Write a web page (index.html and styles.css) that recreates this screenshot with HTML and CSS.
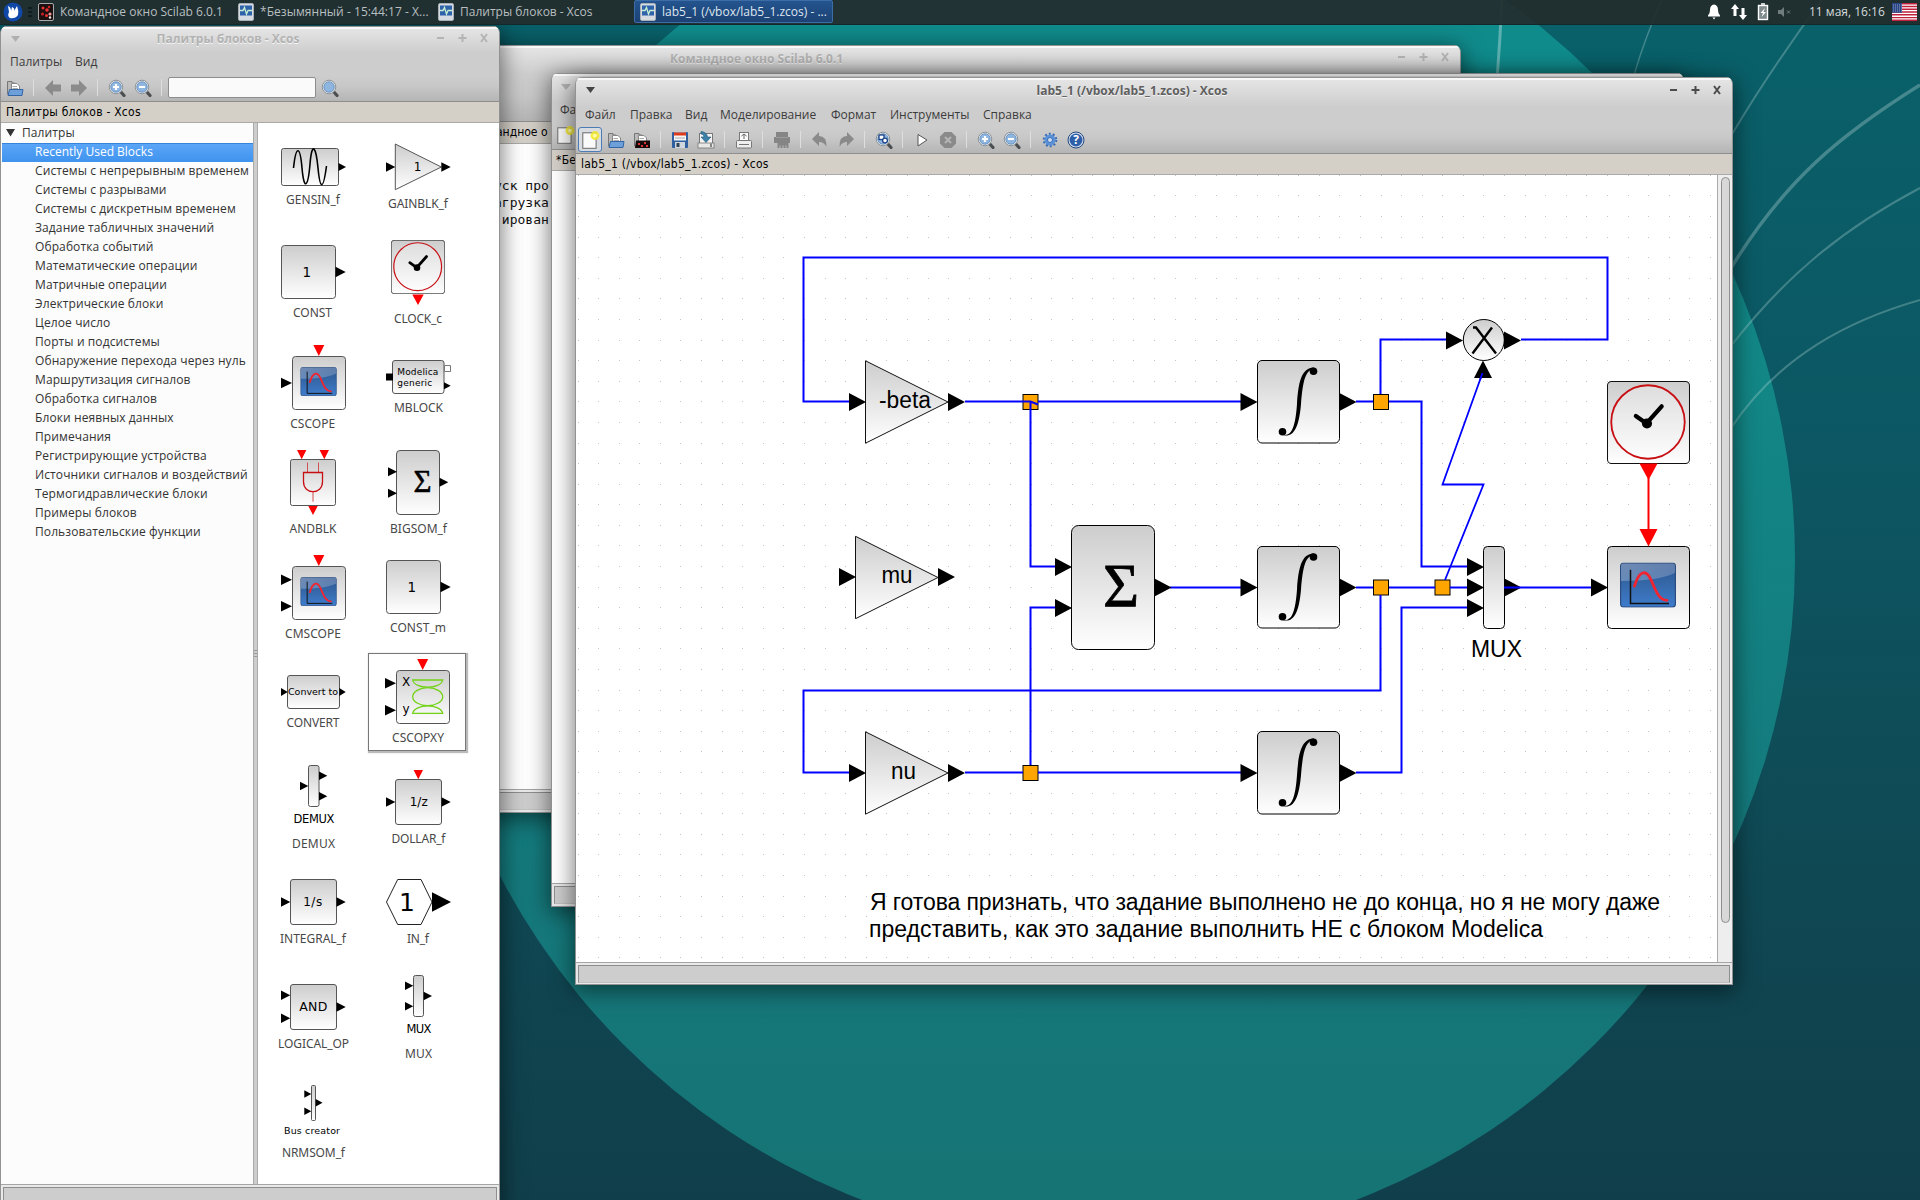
FILE: index.html
```html
<!DOCTYPE html>
<html lang="ru">
<head>
<meta charset="utf-8">
<title>Xcos</title>
<link rel="stylesheet" href="styles.css">
</head>
<body>
<svg class="defs" width="0" height="0" aria-hidden="true">
  <defs>
    <linearGradient id="blk" x1="0" y1="0" x2="0" y2="1"><stop offset="0" stop-color="#cdcdcd"/><stop offset="1" stop-color="#fff"/></linearGradient>
    <linearGradient id="scr" x1="0" y1="0" x2="0" y2="1"><stop offset="0" stop-color="#2c5390"/><stop offset=".4" stop-color="#3465a4"/><stop offset="1" stop-color="#3f7ccc"/></linearGradient>
    <linearGradient id="gloss" x1="0" y1="0" x2="1" y2="1"><stop offset="0" stop-color="#fff" stop-opacity=".32"/><stop offset="1" stop-color="#fff" stop-opacity=".18"/></linearGradient>
    <symbol id="screen" viewBox="0 0 56 44" preserveAspectRatio="none">
      <rect x=".6" y=".6" width="54.8" height="43" rx="3" fill="url(#scr)" stroke="#2a4c80" stroke-width="1.2"/>
      <path d="M1 3Q1 1 3 1H53Q55 1 55 3V10Q40 18 1 18z" fill="url(#gloss)"/>
      <path d="M10.5 7V40H49" fill="none" stroke="#111" stroke-width="1.5"/>
      <path d="M14.500 23C19 8 26 6 31 17C36 28 39 37 47 37" fill="none" stroke="#f22430" stroke-width="2.800" stroke-linecap="round"/>
    </symbol>
    <symbol id="clock" viewBox="0 0 82 82">
      <rect x=".5" y=".5" width="81" height="81" rx="4" fill="url(#blk)" stroke="#111"/>
      <circle cx="40.500" cy="40.500" r="36.300" fill="#fff" fill-opacity=".3" stroke="#c80f14" stroke-width="1.800"/>
      <path d="M28.500 34.500L39 42L54 25" fill="none" stroke="#000" stroke-width="4.200" stroke-linecap="round"/><circle cx="39.500" cy="42" r="5"/>
    </symbol>
    <symbol id="mag" viewBox="0 0 18 18"><path d="M12 12L16 16.500" stroke="#4b4f51" stroke-width="3.200" stroke-linecap="round"/><circle cx="8" cy="8" r="6.800" fill="#dfe3e6" stroke="#8d9396" stroke-width="1"/><circle cx="8" cy="8" r="5.200" fill="#8fb6df" stroke="#5f8cc0" stroke-width=".8"/></symbol>
    <symbol id="plus" viewBox="0 0 18 18"><use href="#mag" width="18" height="18"/><path d="M8 5V11M5 8H11" stroke="#fff" stroke-width="2.200"/></symbol>
    <symbol id="minus" viewBox="0 0 18 18"><use href="#mag" width="18" height="18"/><path d="M5 8H11" stroke="#fff" stroke-width="2.200"/></symbol>
    <symbol id="new" viewBox="0 0 18 18"><rect x="2.500" y="2.500" width="12" height="14" fill="#fafafa" stroke="#777"/><circle cx="13.500" cy="5" r="4" fill="#f5e928" opacity=".85"/><circle cx="13.500" cy="5" r="1.700" fill="#ffffb0"/></symbol>
    <symbol id="open" viewBox="0 0 18 18"><path d="M1.500 15V2.500H6V4H9V15z" fill="#b9bab8" stroke="#777"/><path d="M5.500 12V4.500H11L13.500 7V12z" fill="#fff" stroke="#888"/><path d="M6.500 7.500H11M6.500 9.500H12" stroke="#aaa"/><path d="M3.500 10.500H17L16 16.500H2z" fill="#6da0db" stroke="#3465a4"/></symbol>
    <symbol id="openk" viewBox="0 0 18 18"><path d="M1.500 15V2.500H6V4H9V15z" fill="#b9bab8" stroke="#777"/><path d="M5.500 12V4.500H11L13.500 7V12z" fill="#fff" stroke="#888"/><path d="M6.500 7.500H11" stroke="#aaa"/><path d="M3 9.500H17V17H2z" fill="#140808"/><path d="M5 13h2M8 15h2M11 12h2M13 15h2" stroke="#d33" stroke-width="2"/></symbol>
    <symbol id="arrow" viewBox="0 0 18 18"><path d="M17 5.500H9V1L1 9L9 17V12.500H17z" fill="#8b8b8b"/></symbol>
    <symbol id="heart" viewBox="0 0 16 18"><rect x=".5" y=".5" width="15" height="17" rx="1.500" fill="#d5dbe0" stroke="#a7b0b5"/><rect x="2" y="2.500" width="12" height="10" fill="#2e62ab"/><path d="M2 7.500H5L6.500 4.500L8.500 11L10 7.500H14" stroke="#c8f0d0" stroke-width="1.300" fill="none"/></symbol>
    <symbol id="gain" viewBox="0 0 84 84"><path d="M.5.8V83.200L83 42z" fill="url(#blk)" stroke="#111"/></symbol>
    <symbol id="integ" viewBox="0 0 83 84" preserveAspectRatio="none">
      <rect x=".5" y=".5" width="82" height="82.500" rx="4.500" fill="url(#blk)" stroke="#000"/>
      <path d="M25 74.500C34 77 38.200 69 40 44C41.300 24 44 7.500 57 7.600V9C48.500 10 46 20 44 44C42 68 36.500 77 27 75.300z"/><circle cx="56.500" cy="11.200" r="3.800"/><circle cx="25.500" cy="71.700" r="3.800"/>
    </symbol>
    <path id="port" d="M0-9L17 0L0 9z"/>
    <rect id="split" x="-7.500" y="-7.500" width="15" height="15" fill="#ffa500" stroke="#000"/>
    <g id="wmb" fill="none" stroke-width="2"><path d="M0 10H7M21.500 10H29.500M25.500 6V14"/><path d="M44 6L50 14M50 6L44 14"/></g>
  </defs>
</svg>

<div class="desktop">
  <svg class="wallpaper" viewBox="0 0 1920 1200" width="1920" height="1200">
    <defs>
      <linearGradient id="bg" x1="0" y1="0" x2="0" y2="1"><stop offset="0" stop-color="#09616a"/><stop offset=".4" stop-color="#0c5662"/><stop offset=".75" stop-color="#0f4752"/><stop offset="1" stop-color="#103f4b"/></linearGradient>
      <linearGradient id="disc" x1="0" y1="0" x2="0" y2="1"><stop offset="0" stop-color="#0f8d8f"/><stop offset=".35" stop-color="#128786"/><stop offset=".75" stop-color="#15787b"/><stop offset="1" stop-color="#167373"/></linearGradient>
    </defs>
    <rect width="1920" height="1200" fill="url(#bg)"/>
    <circle cx="1109" cy="560" r="686" fill="url(#disc)"/>
    <g fill="none" stroke="#cfe8e6">
      <path d="M1502 0Q1500 40 1497 80" stroke-width="3" opacity=".4"/>
      <path d="M1662 0Q1646 35 1634 75" stroke-width="1.500" opacity=".28"/>
      <path d="M1822 0Q1770 70 1731 136" stroke-width="2" opacity=".28"/>
      <path d="M1920 85C1840 135 1785 180 1731 268" stroke-width="3.500" opacity=".3"/>
      <path d="M1920 188C1850 225 1790 270 1731 346" stroke-width="2" opacity=".28"/>
      <path d="M1920 300C1850 320 1780 355 1731 428" stroke-width="2" opacity=".28"/>
    </g>
  </svg>

  <section class="win console">
    <header class="title"><span class="cap">Командное окно Scilab 6.0.1</span><svg class="btns" width="54" height="20"><use href="#wmb"/></svg></header>
    <div class="tools"></div>
    <div class="tab">андное о</div>
    <pre class="out">уск про
агрузка
 ирован</pre>
    <footer class="status"><i></i></footer>
  </section>

  <section class="win untitled">
    <header class="title"><svg class="menu-tri" width="10" height="6"><path d="M0 0H10L5 6z"/></svg></header>
    <nav class="menu"><span>Фа</span></nav>
    <div class="tools"><svg width="20" height="20"><use href="#new"/></svg></div>
    <div class="tab">*Бе</div>
    <div class="paper"></div>
    <footer class="status"><i></i></footer>
  </section>

  <section class="win main">
    <header class="title"><svg class="menu-tri" width="10" height="6"><path d="M0 0H9L4.500 6z"/></svg><span class="cap">lab5_1 (/vbox/lab5_1.zcos) - Xcos</span><svg class="btns" width="54" height="20"><use href="#wmb"/></svg></header>
    <nav class="menu"><span class="m1">Файл</span><span class="m2">Правка</span><span class="m3">Вид</span><span class="m4">Моделирование</span><span class="m5">Формат</span><span class="m6">Инструменты</span><span class="m7">Справка</span></nav>
    <div class="tools">
      <b class="hot"><svg width="20" height="20"><use href="#new"/></svg></b>
      <svg width="18" height="18"><use href="#open"/></svg>
      <svg width="18" height="18"><use href="#openk"/></svg>
      <i></i>
      <svg width="18" height="18"><rect x="1" y="1" width="16" height="16" rx="1" fill="#2f5f9f"/><rect x="3" y="1.500" width="12" height="8" fill="#f6f6f6"/><rect x="3" y="1.500" width="12" height="3" fill="#e03a1c"/><path d="M4 7h10" stroke="#aaa"/><rect x="4" y="11" width="10" height="6" fill="#cfd6de"/><rect x="5.500" y="12" width="3" height="4" fill="#345"/></svg>
      <svg width="18" height="18"><rect x="2.500" y="2.500" width="13" height="14" fill="#f4f4f4" stroke="#777"/><rect x="1" y="12" width="16" height="5" fill="#e8e8e6" stroke="#777" stroke-width=".8"/><path d="M4 0.500Q10 1 10.500 6H14L9 11.500L4 6H7Q7 3 4 3z" fill="#3c81a8" stroke="#24597a" stroke-width=".6"/><path d="M14 12.500V16" stroke="#222"/></svg>
      <i></i>
      <svg width="18" height="18"><rect x="4.500" y="1.500" width="9" height="9" fill="#fafafa" stroke="#777"/><path d="M9 3V8M6.500 5L9 3L11.500 5" stroke="#666" fill="none"/><rect x="1.500" y="9.500" width="15" height="7.500" rx="1" fill="#eee" stroke="#777"/><path d="M4 13.500H14" stroke="#777"/></svg>
      <i></i>
      <svg width="18" height="18"><path d="M3 1H15V6H17V12H15.500V17H13.500V14.500H12.500V17H10.500V14.500H9.500V17H7.500V14.500H6.500V17H4.500V12H1V6H3z" fill="#858585"/><path d="M3 6.500H15" stroke="#9c9c9c"/></svg>
      <i></i>
      <svg width="18" height="18"><path d="M8 1V5Q16 5 15.500 16Q13 11 8 11V15L1 8z" fill="#8a8a8a"/></svg>
      <svg width="18" height="18"><path d="M10 1V5Q2 5 2.500 16Q5 11 10 11V15L17 8z" fill="#8a8a8a"/></svg>
      <i></i>
      <svg width="18" height="18"><use href="#mag"/><rect x="4" y="4" width="5" height="4.500" fill="#fff" stroke="#1d4486" stroke-width="1.300"/><circle cx="10" cy="9.500" r="2.400" fill="#fff" stroke="#1d4486" stroke-width="1.300"/></svg>
      <i></i>
      <svg width="18" height="18"><path d="M5 3.500L14 9L5 15z" fill="#fff" stroke="#555"/></svg>
      <svg width="18" height="18"><path d="M5.500 1H12.500L17 5.500V12.500L12.500 17H5.500L1 12.500V5.500z" fill="#8a8a8a"/><path d="M6 6L12 12M12 6L6 12" stroke="#b5b5b5" stroke-width="2"/></svg>
      <i></i>
      <svg width="18" height="18"><use href="#plus"/></svg>
      <svg width="18" height="18"><use href="#minus"/></svg>
      <i></i>
      <svg width="18" height="18"><circle cx="9" cy="9" r="5.500" fill="#5a91d8"/><circle cx="9" cy="9" r="6.300" fill="none" stroke="#3a6fb8" stroke-width="2" stroke-dasharray="2 1.960"/><circle cx="9" cy="9" r="2.500" fill="#cfdcec" stroke="#3a6fb8"/></svg>
      <svg width="18" height="18"><circle cx="9" cy="9" r="8" fill="#d9e3f0" stroke="#23467c"/><circle cx="9" cy="9" r="6.500" fill="#2f5fa8"/><text x="9" y="13.300" class="q">?</text></svg>
    </div>
    <div class="tab">lab5_1 (/vbox/lab5_1.zcos) - Xcos</div>
    <div class="work">
      <svg class="diagram" width="1141" height="787" viewBox="576 175 1141 787">
        <path id="dots" fill="#c3c3c3"/>
        <use href="#split" x="1030.500" y="402"/><use href="#split" x="1381" y="402"/><use href="#split" x="1381" y="587.500"/><use href="#split" x="1442.500" y="587.500"/><use href="#split" x="1030.500" y="773"/>
        <g fill="none" stroke="#00f" stroke-width="2">
          <path d="M1521 339.500H1607.500V257.500H803.500V401.500H850"/>
          <path d="M965 401.500H1030.500L1038 404.500M1030.500 401.500V566.500H1056M1038 401.500H1241"/>
          <path d="M1170 587.500H1241M1356 401.500H1373M1380.500 394V339.500H1447M1389 401.500H1421.500V566.500H1468"/>
          <path d="M1356 587.500H1373M1389 587.500H1435M1450 587.500H1468"/>
          <path d="M1445 580L1483.500 484.500H1442.500L1482.500 373" stroke-width="1.800"/>
          <path d="M1380.500 595V690.500H803.500V772.500H850M965 772.500H1023M1038 772.500H1241M1030.500 765V607.500H1056"/>
          <path d="M1356 772.500H1401.500V607.500H1468"/>
        </g>
        <path d="M1648.500 478V531" stroke="#f00" stroke-width="2"/>
        <use href="#gain" x="865" y="360" width="84" height="84"/><use href="#gain" x="855" y="535.500" width="84" height="84"/><use href="#gain" x="865" y="731" width="84" height="84"/>
        <use href="#integ" x="1257" y="360" width="83" height="84"/><use href="#integ" x="1257" y="546" width="83" height="83"/><use href="#integ" x="1257" y="731" width="83" height="84"/>
        <rect x="1071.500" y="525.500" width="83" height="124" rx="7" fill="url(#blk)" stroke="#000"/>
        <text x="1121" y="605.500" class="sigma">Σ</text>
        <rect x="1483.500" y="546.500" width="21" height="82" rx="4" fill="url(#blk)" stroke="#000"/>
        <circle cx="1483.800" cy="340" r="20.500" fill="url(#blk)" stroke="#000"/>
        <path d="M1473 327.500H1476L1496 353.500M1492 327.500L1472.500 353.500" fill="none" stroke="#000" stroke-width="2.400"/>
        <use href="#clock" x="1607" y="381" width="83" height="83"/>
        <rect x="1607.500" y="546.500" width="82" height="82" rx="4" fill="url(#blk)" stroke="#000"/>
        <use href="#screen" x="1620" y="562.500" width="56" height="45"/>
        <use href="#port" x="849" y="402"/><use href="#port" x="948" y="402"/><use href="#port" x="839" y="577"/><use href="#port" x="938" y="577"/><use href="#port" x="849" y="773"/><use href="#port" x="948" y="773"/>
        <use href="#port" x="1240.500" y="402"/><use href="#port" x="1240.500" y="587.500"/><use href="#port" x="1240.500" y="773"/><use href="#port" x="1339.500" y="402"/><use href="#port" x="1339.500" y="587.500"/><use href="#port" x="1339.500" y="773"/>
        <use href="#port" x="1055" y="567"/><use href="#port" x="1055" y="608"/><use href="#port" x="1154.500" y="587.500"/>
        <use href="#port" x="1446" y="340.500"/><use href="#port" x="1504" y="340.500"/><use href="#port" x="1467" y="567"/><use href="#port" x="1467" y="587.500"/><use href="#port" x="1467" y="608"/><use href="#port" x="1504.500" y="587.500"/><use href="#port" x="1591" y="587.500"/>
        <path d="M1474 378L1483 360.500L1492 378z"/>
        <path d="M1482.500 373L1480 380M1504 587.500H1591" stroke="#00f" stroke-width="1.800"/>
        <path d="M1639.500 463.500H1657.500L1648.500 480zM1639.500 529H1657.500L1648.500 546.500z" fill="red"/>
        <g class="lbl">
          <text x="879" y="407.500" textLength="52" lengthAdjust="spacingAndGlyphs">-beta</text><text x="881.500" y="583" textLength="31" lengthAdjust="spacingAndGlyphs">mu</text><text x="891" y="779" textLength="25" lengthAdjust="spacingAndGlyphs">nu</text>
          <text x="1471" y="656.800" textLength="51" lengthAdjust="spacingAndGlyphs">MUX</text>
          <text x="870" y="909.500" textLength="790" lengthAdjust="spacing">Я готова признать, что задание выполнено не до конца, но я не могу даже</text>
          <text x="869" y="936.500" textLength="674" lengthAdjust="spacing">представить, как это задание выполнить НЕ с блоком Modelica</text>
        </g>
      </svg>
      <div class="scroll"><span></span></div>
    </div>
    <footer class="status"><i></i></footer>
  </section>

  <section class="win palette">
    <header class="title"><svg class="menu-tri" width="10" height="6"><path d="M0 0H9L4.500 6z"/></svg><span class="cap">Палитры блоков - Xcos</span><svg class="btns" width="54" height="20"><use href="#wmb"/></svg></header>
    <nav class="menu"><span class="p1">Палитры</span><span class="p2">Вид</span></nav>
    <div class="tools">
      <svg width="18" height="18"><use href="#open"/></svg><i></i>
      <svg width="18" height="18"><use href="#arrow"/></svg><svg class="flip" width="18" height="18"><use href="#arrow"/></svg><i></i>
      <svg width="18" height="18"><use href="#plus"/></svg><svg width="18" height="18"><use href="#minus"/></svg><i></i>
      <span class="field"></span>
      <svg width="18" height="18"><use href="#mag"/></svg>
    </div>
    <div class="tab">Палитры блоков - Xcos</div>
    <div class="split">
      <ul class="tree">
        <li class="root"><svg width="9" height="8"><path d="M0 0H9L4.500 7.500z" fill="#333"/></svg>Палитры</li>
        <li class="sel">Recently Used Blocks</li>
        <li>Системы с непрерывным временем</li><li>Системы с разрывами</li><li>Системы с дискретным временем</li><li>Задание табличных значений</li><li>Обработка событий</li><li>Математические операции</li><li>Матричные операции</li><li>Электрические блоки</li><li>Целое число</li><li>Порты и подсистемы</li><li>Обнаружение перехода через нуль</li><li>Маршрутизация сигналов</li><li>Обработка сигналов</li><li>Блоки неявных данных</li><li>Примечания</li><li>Регистрирующие устройства</li><li>Источники сигналов и воздействий</li><li>Термогидравлические блоки</li><li>Примеры блоков</li><li>Пользовательские функции</li>
      </ul>
      <div class="sash"><svg width="3" height="8"><path d="M0 .5H4M0 3.500H4M0 6.500H4" stroke="#999"/></svg></div>
      <div class="blocks">
        <svg viewBox="0 0 98 98"><rect class="b" x="18.500" y="20.500" width="57" height="37" rx="2"/><path class="s" d="M30.500 40C33 17 37 17 39 40S45 60 47 36S53 19 55 40S60 64 63.500 38"/><path d="M75.500 35L83 39L75.500 43z"/><text x="50" y="76" textLength="54">GENSIN_f</text></svg>
        <svg viewBox="0 0 98 98"><path class="b" d="M27.300 16V61.700L73.300 39z"/><path d="M18 34.300L27.300 39L18 43.700zM73.300 34.300L82.700 39L73.300 43.700z"/><text class="d" x="49.500" y="43" font-size="12">1</text><text x="50" y="79.700" textLength="60">GAINBLK_f</text></svg>
        <svg viewBox="0 0 98 98"><rect class="b" x="18.500" y="12.500" width="54" height="53" rx="3"/><path d="M72.500 33.700L82.700 39L72.500 44.300z"/><text class="d" x="43.700" y="44" font-size="13.500">1</text><text x="49.500" y="84" textLength="39">CONST</text></svg>
        <svg viewBox="0 0 98 98"><use href="#clock" x="23" y="7" width="54" height="54"/><path class="r" d="M44.300 61.500H55.700L50 72z"/><text x="50" y="90" textLength="48">CLOCK_c</text></svg>
        <svg viewBox="0 0 98 98"><rect class="b" x="29.500" y="18.500" width="53" height="53" rx="3"/><use href="#screen" x="37.300" y="29" width="36.500" height="29"/><path d="M18 39.700L29 45L18 50.300z"/><path class="r" d="M50.300 7H61.300L55.800 18z"/><text x="49.700" y="90" textLength="45">CSCOPE</text></svg>
        <svg viewBox="0 0 98 98"><rect class="b" x="24.500" y="22.500" width="51.500" height="33" rx="2.500"/><path d="M18 35.500H25V42.500H18zM76 44.200L82.700 47.700L76 51.200z"/><path d="M76.500 27.500H82.500V33.500H76.500z" fill="#fff" stroke="#777"/><text class="d l" x="29.300" y="36.700" font-size="9" textLength="41">Modelica</text><text class="d l" x="29.300" y="48.300" font-size="9" textLength="35">generic</text><text x="50.500" y="74" textLength="49">MBLOCK</text></svg>
        <svg viewBox="0 0 98 98"><rect class="b" x="27.500" y="16.500" width="45" height="46" rx="2"/><path class="r" d="M34 7H43.400L38.700 16.300zM56.600 7H66L61.300 16.300zM45.300 63H54.700L50 72z"/><path d="M44.500 19.500V29.500M55.500 19.500V29.500M50 49V58.700" stroke="#cf5050" fill="none"/><path d="M40.500 29.500H59.500V38.700C59.500 52 40.500 52 40.500 38.700z" fill="none" stroke="#c80f14" stroke-width="1.300"/><text x="50" y="90" textLength="47">ANDBLK</text></svg>
        <svg viewBox="0 0 98 98"><rect class="b" x="28.500" y="7.500" width="43" height="64" rx="3.500"/><path d="M20 24.200L29 28.700L20 33.200zM20 45.800L29 50.300L20 54.800zM71.500 34.800L80.300 39.300L71.500 43.800z"/><text class="sg" x="54.500" y="49" font-size="31">Σ</text><text x="50.500" y="90" textLength="57">BIGSOM_f</text></svg>
        <svg viewBox="0 0 98 98"><rect class="b" x="29.500" y="18.500" width="53" height="53" rx="3"/><use href="#screen" x="37.300" y="29" width="36.500" height="29"/><path d="M18 26.400L29 31.700L18 37zM18 53L29 58.300L18 63.600z"/><path class="r" d="M50.300 7H61.300L55.800 18z"/><text x="50" y="90" textLength="56">CMSCOPE</text></svg>
        <svg viewBox="0 0 98 98"><rect class="b" x="18.500" y="12.500" width="54" height="53" rx="3"/><path d="M72.500 33.700L82.700 39L72.500 44.300z"/><text class="d" x="43.700" y="44" font-size="13.500">1</text><text x="50" y="84" textLength="56">CONST_m</text></svg>
        <svg viewBox="0 0 98 98"><rect class="b" x="24.500" y="22.500" width="52" height="33" rx="2.500"/><path d="M18 35L24.700 39L18 43zM76.300 35L82.700 39L76.300 43z"/><text class="d" x="50" y="42.300" font-size="9.500" textLength="50">Convert to</text><text x="50" y="74" textLength="53">CONVERT</text></svg>
        <svg class="picked" viewBox="0 0 98 98"><rect class="b" x="28.500" y="17.500" width="53" height="53" rx="3"/><path d="M17 25L28 30.300L17 35.600zM17 52L28 57.300L17 62.600z"/><path class="r" d="M49.200 6H60.200L54.700 17z"/><g fill="none" stroke="#73d216" stroke-width="1.300"><path d="M44.700 27H74.700C73 36.500 46.500 36.500 44.700 27zM44.700 60.300H74.700C73 50.500 46.500 50.500 44.700 60.300z"/><ellipse cx="59.700" cy="43.700" rx="15" ry="9"/></g><text class="d" x="38" y="33" font-size="12">X</text><text class="d" x="38" y="60" font-size="12">y</text><text x="50" y="89" textLength="52">CSCOPXY</text></svg>
        <svg viewBox="0 0 98 98"><rect class="b" x="45.500" y="7.500" width="10.500" height="41" rx="2"/><path d="M37 23.700L45.300 28L37 32.300zM56 13.400L64.300 17.700L56 22zM56 34L64.300 38.300L56 42.600z"/><text class="d" x="51" y="65.300" font-size="11.500" textLength="41">DEMUX</text><text x="50.500" y="90" textLength="43">DEMUX</text></svg>
        <svg viewBox="0 0 98 98"><rect class="b" x="27.500" y="21.500" width="46" height="45" rx="2.500"/><path d="M18 39.300L27.300 44L18 48.700zM73.500 39.300L82.700 44L73.500 48.700z"/><path class="r" d="M45.600 12H55L50.300 21.300z"/><text class="d" x="50.700" y="48.300" font-size="12" textLength="18">1/z</text><text x="50.500" y="85" textLength="54">DOLLAR_f</text></svg>
        <svg viewBox="0 0 98 98"><rect class="b" x="27.500" y="16.500" width="46" height="45" rx="2.500"/><path d="M18 34.300L27.300 39L18 43.700zM73.500 34.300L82.700 39L73.500 43.700z"/><text class="d" x="49.700" y="43" font-size="12" textLength="19">1/s</text><text x="50" y="80" textLength="66">INTEGRAL_f</text></svg>
        <svg viewBox="0 0 98 98"><path d="M18.500 39L29.700 16.500H53L64 39L53 61.500H29.700z" fill="#fff" stroke="#222"/><path d="M64 29.300L83 39L64 48.700z"/><text class="d" x="39" y="47.700" font-size="25">1</text><text x="50" y="80" textLength="22">IN_f</text></svg>
        <svg viewBox="0 0 98 98"><rect class="b" x="27.500" y="16.500" width="46" height="45" rx="2.500"/><path d="M18 22.600L27.300 27.300L18 32zM18 45.600L27.300 50.300L18 55zM73.500 34.300L82.700 39L73.500 43.700z"/><text class="d" x="50.300" y="43.300" font-size="12.500" textLength="28">AND</text><text x="50.500" y="80" textLength="71">LOGICAL_OP</text></svg>
        <svg viewBox="0 0 98 98"><rect class="b" x="45.500" y="7.500" width="10" height="41" rx="2"/><path d="M37 13.400L45.300 17.700L37 22zM37 34L45.300 38.300L37 42.600zM55.700 23.700L64 28L55.700 32.300z"/><text class="d" x="51" y="65.300" font-size="11.500" textLength="25">MUX</text><text x="50.500" y="89.700" textLength="27">MUX</text></svg>
        <svg viewBox="0 0 98 98"><rect class="b" x="48.500" y="12.500" width="4" height="35" rx="1"/><path d="M41.300 17.300L48.300 21L41.300 24.700zM41.300 34.600L48.300 38.300L41.300 42zM52.700 26L59.500 29.700L52.700 33.400z"/><text class="d" x="49" y="61.300" font-size="9.500" textLength="56">Bus creator</text><text x="50.500" y="84.300" textLength="63">NRMSOM_f</text></svg>
      </div>
    </div>
    <footer class="status"><i></i></footer>
  </section>

  <header class="panel">
    <svg class="xfce" width="20" height="20"><circle cx="10" cy="10" r="9.500" fill="#1048a8"/><path d="M5 4Q8 5 8 9L9 5Q12 6 11 9L14 4Q16 9 15 13Q12 17 7 16Q4 14 6 10z" fill="#fff"/></svg>
    <span class="grip"></span>
    <div class="task t1"><svg width="16" height="18"><rect x=".5" y=".5" width="15" height="17" rx="1.500" fill="#1b0f10" stroke="#aaa"/><circle cx="5" cy="5" r="1.500" fill="#e33"/><circle cx="9" cy="7" r="1.800" fill="#e33"/><circle cx="4.500" cy="11" r="1.500" fill="#c22"/><circle cx="12" cy="11" r="1.600" fill="#e99"/><circle cx="11" cy="4" r="1.300" fill="#c22"/><circle cx="8.500" cy="12.500" r="1.500" fill="#e33"/><circle cx="12" cy="14.500" r="1.200" fill="#eee"/></svg><span>Командное окно Scilab 6.0.1</span></div>
    <div class="task t2"><svg width="16" height="18"><use href="#heart"/></svg><span>*Безымянный - 15:44:17 - X...</span></div>
    <div class="task t3"><svg width="16" height="18"><use href="#heart"/></svg><span>Палитры блоков - Xcos</span></div>
    <div class="task t4 on"><svg width="16" height="18"><use href="#heart"/></svg><span>lab5_1 (/vbox/lab5_1.zcos) - ...</span></div>
    <div class="tray">
      <svg width="14" height="16" fill="#fff"><path d="M7 .5Q11 1 11 6Q11 10 13 11.500V12.500H1V11.500Q3 10 3 6Q3 1 7 .5zM5.500 13.500H8.500L7 15.500z"/></svg>
      <svg width="18" height="18" fill="#fff"><path d="M5 1L9 6H6.500V13H3.500V6H1zM13 17L9 12H11.500V5H14.500V12H17z"/></svg>
      <svg width="12" height="18"><rect x="1.500" y="2.500" width="9" height="14" fill="#7e8a8c" stroke="#fff" stroke-width="1.400"/><path d="M4 1H8" stroke="#fff" stroke-width="1.500"/><path d="M8 5L3.500 10H6L4.500 14L9 9H6.500z" fill="#fff"/></svg>
      <svg width="14" height="14"><path d="M0 5H3L6 2V12L3 9H0z" fill="#6f7d7e"/><path d="M9 5.500L12 8.500M12 5.500L9 8.500" stroke="#6f7d7e"/></svg>
      <span class="time">11 мая, 16:16</span>
      <svg class="flag" width="25" height="18"><rect width="25" height="18" fill="#fff"/><path d="M0 .7H25M0 3.500H25M0 6.300H25M0 9H25M0 11.800H25M0 14.600H25M0 17.300H25" stroke="#c0203c" stroke-width="1.400"/><rect width="10" height="9.700" fill="#2b4583"/><path d="M1 2H10M1 4H10M1 6H10M1 8H10" stroke="#8b9cc4" stroke-dasharray="1 1"/></svg>
    </div>
  </header>
</div>
<script src="grid.js"></script>
</body>
</html>
```

FILE: grid.js
```js
// Dotted sheet grid: one whole-pixel dot at every step of the zoomed grid.
const step = 20.59;
let d = '';
for (let i = -33; i < 23; i++) {
  for (let j = -7; j < 32; j++) {
    const x = Math.floor(1257.5 + i * step);
    const y = Math.floor(319.5 + j * step);
    d += `M${x} ${y}h1v1h-1z`;
  }
}
document.getElementById('dots').setAttribute('d', d);
```

FILE: styles.css
```css
* { box-sizing: border-box; }
body { margin: 0; width: 1920px; height: 1200px; overflow: hidden; font-family: "Open Sans", "Noto Sans", sans-serif; font-size: 12px; color: #3c3c3c; }
.defs { position: absolute; }
svg { display: block; flex: none; }
.desktop { position: relative; width: 1920px; height: 1200px; overflow: hidden; }
.wallpaper { position: absolute; left: 0; top: 0; }

.panel { position: absolute; left: 0; top: 0; width: 1920px; height: 25px; background: rgba(34, 44, 45, .93); border-bottom: 1px solid #14282b; display: flex; align-items: center; color: #b9bfc0; font-size: 12px; padding: 0 3px 1px 0; white-space: nowrap; }
.xfce { margin-left: 3px; }
.grip { width: 4px; height: 10px; margin: 0 8px 0 5px; background: repeating-linear-gradient(#111c1e 0 2px, transparent 2px 4px); }
.task { display: flex; align-items: center; gap: 6px; height: 24px; }
.task svg { margin-left: 2px; }
.t1 { width: 200px; margin-left: -4px; }
.t2 { width: 200px; letter-spacing: .05px; }
.t3 { width: 198px; }
.t4 { width: 199px; }
.task.on { background: linear-gradient(#24548f, #1c4273); border: 1px solid #3d6da6; height: 23px; border-radius: 2px; color: #dfe6ee; }
.task.on svg { margin-left: 5px; }
.tray { margin-left: auto; display: flex; align-items: center; }
.tray svg { margin-right: 9px; }
.time { color: #d5dadb; margin: 0 7px 0 8px; width: 76px; }
.tray .flag { margin-right: 0; }

.win { position: absolute; display: flex; flex-direction: column; border: 1px solid #929292; border-top: 0; border-radius: 7px 7px 0 0; background: #cdcdcd; box-shadow: 0 4px 22px 2px rgba(0, 0, 0, .5); overflow: hidden; white-space: nowrap; }
.title { flex: none; height: 29px; border-top: 1px solid #929292; box-shadow: inset 0 2px #f8f8f8; background: linear-gradient(#e6e6e6, #cecece); display: flex; align-items: center; position: relative; padding-bottom: 4px; }
.cap { flex: 1; text-align: center; font-weight: 700; color: #b2b2b2; text-shadow: 0 1px #f4f4f4; padding-right: 44px; }
.menu-tri { position: absolute; left: 10px; top: 9px; fill: #b0b0b0; }
.btns { position: absolute; right: 8px; top: 1px; stroke: #b4b4b4; }
.menu { flex: none; height: 22px; display: flex; align-items: center; padding-bottom: 3px; }
.menu span { flex: none; }
.tools { flex: none; display: flex; align-items: center; background: linear-gradient(#cecece, #c8c8c8 45%, #b5b5b5); border-bottom: 1px solid #8e8e8e; }
.tools i { width: 1px; height: 17px; background: #dedede; flex: none; }
.tab { flex: none; height: 21px; line-height: 20px; padding-left: 5px; background: #d4d0c8; border-bottom: 1px solid #aaa; color: #000; font-family: "DejaVu Sans Condensed", "DejaVu Sans", sans-serif; font-size: 12px; font-stretch: condensed; letter-spacing: .24px; }
.status { flex: none; padding: 2px 2px 2px; border-top: 1px solid #a5a5a5; background: #e9e9e9; display: flex; }
.status i { flex: 1; background: #cdcdcd; border: 1px solid #8e8e8e; border-bottom-color: #c0c0c0; }

.console { left: 300px; top: 45px; width: 1161px; height: 768px; }
.console .cap { padding-right: 248px; }
.console .tools { height: 48px; }
.console .tab { padding-left: 195px; height: 22px; letter-spacing: 0; }
.out { flex: 1; margin: 0; padding: 33px 0 0 193px; background: #fff; color: #111; font: 13px/17px "DejaVu Sans Mono", monospace; }
.console .status { height: 23px; }

.untitled { left: 551px; top: 73px; width: 1133px; height: 834px; }
.untitled .menu { height: 18px; padding-left: 8px; }
.untitled .tools { height: 30px; padding-left: 3px; }
.untitled .tab { padding-left: 4px; }
.paper { flex: 1; background: #fff; }
.untitled .status { height: 23px; }
.untitled .menu-tri { left: 9px; top: 10px; }

.main { left: 575px; top: 77px; width: 1158px; height: 908px; }
.main .cap { color: #5f5f5f; }
.main .menu-tri { fill: #444; top: 9px; }
.main .btns { stroke: #4c4c4c; top: 2px; }
.main .menu { height: 19px; padding-left: 9px; }
.m1 { width: 45px; } .m2 { width: 55px; } .m3 { width: 35px; } .m4 { width: 111px; } .m5 { width: 59px; } .m6 { width: 93px; }
.main .tools { height: 29px; padding: 1px 0 0 2px; gap: 8px; }
.main .tools i { margin: 0 2px 0 1px; }
.hot { width: 24px; height: 25px; border: 1px solid #4a7cb6; border-radius: 3px; background: #d8dbe0; display: flex; align-items: center; justify-content: center; margin-right: -3px; }
.q { fill: #fff; font: 700 12px "Open Sans", sans-serif; text-anchor: middle; }
.work { flex: 1; display: flex; background: #fff; }
.scroll { flex: 1; border-left: 1px solid #aaa; background: #eee; padding: 2px 3px; }
.scroll span { display: block; height: 746px; width: 9px; border: 1px solid #8f8f8f; border-radius: 5px; background: #d8d8d8; }
.main .status { height: 23px; }
.lbl text { font-family: "Liberation Sans", Arial, sans-serif; font-size: 23px; fill: #000; }
.sigma, .sg { font-family: "Liberation Serif", serif; text-anchor: middle; fill: #000; }
.sigma { font-size: 62px; stroke: #000; stroke-width: .8; }

.palette { left: 0; top: 26px; width: 500px; height: 1182px; }
.palette .title { height: 26px; padding-bottom: 2px; }
.palette .menu { height: 21px; padding-left: 9px; padding-bottom: 2px; }
.p1 { width: 65px; }
.palette .tools { height: 29px; padding: 1px 0 0 5px; }
.palette .tools i { margin: 0 10px 0 9px; }
.palette .tools svg + svg { margin-left: 8px; }
.flip { transform: scaleX(-1); }
.tools .field { width: 148px; height: 21px; background: #fafafa; border: 1px solid #8d8d8d; border-radius: 2px; margin: 0 5px 0 -4px; }
.split { flex: 1; display: flex; min-height: 0; }
.tree { width: 253px; margin: 0; padding: 1px 0 0 1px; list-style: none; background: #fcfcfc; border-right: 1px solid #aaa; color: #333; letter-spacing: .1px; }
.tree li { height: 19px; line-height: 18px; padding-left: 33px; }
.tree .root { padding: 0 0 2px 4px; display: flex; align-items: center; gap: 7px; }
.tree .sel { background: linear-gradient(#5aa5f8, #3f93ee); border-top: 1px solid #3584da; color: #fff; line-height: 15px; letter-spacing: 0; }
.sash { width: 4px; background: #cdcdcd; display: flex; align-items: center; border-right: 1px solid #aaa; }
.blocks { flex: 1; background: #fff; display: grid; grid-template-columns: 98px 98px; grid-auto-rows: 98px; gap: 7px; padding: 5px 0 0 5px; align-content: start; font-size: 12px; }
.blocks text { fill: #484848; text-anchor: middle; font-family: "Noto Sans", sans-serif; }
.blocks text.d { font-family: "DejaVu Sans", sans-serif; fill: #000; }
.blocks text.l { text-anchor: start; }
.blocks text.sg { font-family: "Liberation Serif", serif; fill: #000; stroke: #000; stroke-width: .5; }
.blocks .b { fill: url(#blk); stroke: #555; }
.blocks .s { fill: none; stroke: #000; stroke-width: 1.6; }
.blocks .r { fill: red; }
.picked { outline: 1px solid #777; outline-offset: -1px; box-shadow: 1px 1px 1px 1px #bbb; }
.palette .status { height: 23px; }
```
